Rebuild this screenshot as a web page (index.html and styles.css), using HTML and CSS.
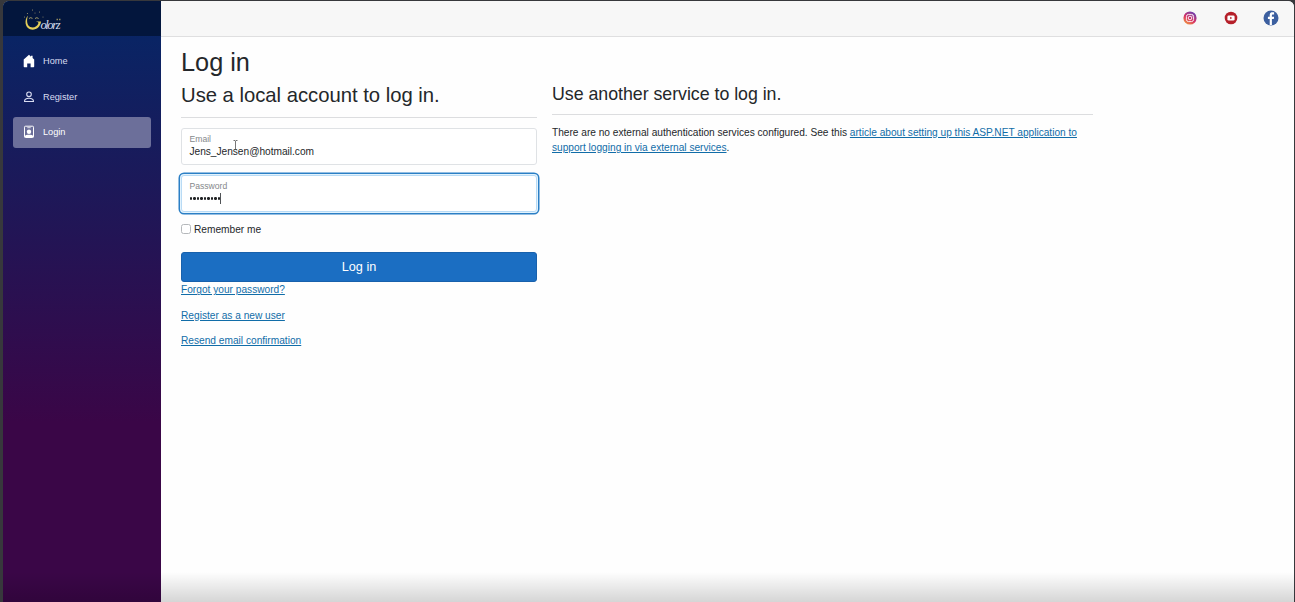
FILE: index.html
```html
<!DOCTYPE html>
<html lang="en">
<head>
<meta charset="utf-8">
<title>Log in</title>
<link rel="stylesheet" href="styles.css">
</head>
<body>
<div class="window">
  <aside class="sidebar">
    <div class="brand">
      <svg class="logo" width="44" height="26" viewBox="0 0 44 26">
        <path d="M5 6.500C1 11 2 18.500 7 20.300c5.200 1.700 10.500-2 11-7.800h-5.500c1.900.3 2.900.8 3 1.600-1.200 3.800-5 5.300-8.200 4C4 16.500 3.300 11.500 5 6.500z" fill="#e5cf58"/>
        <path d="M6 9.500q1.600-1.600 3.500-.1M12 9.500q1.900-1.600 3.600 0" fill="none" stroke="#c9bd75" stroke-width=".8"/>
        <g fill="#9d9470"><circle cx="4.500" cy="4.500" r=".6"/><circle cx="9.500" cy="1" r=".6"/><circle cx="12" cy="4" r=".5"/><circle cx="16.500" cy="3" r=".6"/><circle cx="1.500" cy="8" r=".5"/><circle cx="20" cy="8" r=".5"/></g>
        <text class="logo-text" x="17.500" y="19.500" textLength="20">olorz</text>
        <path d="M33.500 10.500h4" stroke="#938b60" stroke-width="1.500" stroke-dasharray="1.500 1"/>
      </svg>
    </div>
    <nav class="nav">
      <a class="nav-item"><svg width="14" height="14" viewBox="0 0 14 14"><path d="M7 .8 1.700 5.500v7c0 .4.300.7.700.7h2.800V9.500h3.400v3.700h2.900c.4 0 .7-.3.700-.7v-7l-1.600-1.400V1.800H9v1z" fill="#fff"/></svg>Home</a>
      <a class="nav-item"><svg width="14" height="14" viewBox="0 0 14 14" fill="none" stroke="#d9dcf0" stroke-width="1.100"><circle cx="7" cy="4.300" r="2.300"/><path d="M2.500 11.500c0-2 2-3.200 4.500-3.200s4.500 1.200 4.500 3.200z" stroke-linejoin="round"/></svg>Register</a>
      <a class="nav-item active"><svg width="14" height="14" viewBox="0 0 14 14"><rect x="2.500" y="1.200" width="9" height="11.300" rx="1" fill="none" stroke="#fff"/><path d="M5.300 2.700h3.400" stroke="#fff" stroke-width=".8"/><circle cx="7" cy="6.700" r="2.200" fill="#fff"/><path d="M2.500 12.300V11c1-1 2.500-1.300 4.500-1.300s3.500.3 4.500 1.300v1.300z" fill="#fff"/></svg>Login</a>
    </nav>
  </aside>
  <div class="page">
    <header class="topbar">
      <svg width="14" height="14" viewBox="0 0 14 14">
        <defs><linearGradient id="insta" x1=".15" y1="1" x2=".75" y2="0"><stop offset="0" stop-color="#f3a43d"/><stop offset=".45" stop-color="#d93263"/><stop offset="1" stop-color="#6440b5"/></linearGradient></defs>
        <circle cx="7" cy="7" r="6.600" fill="url(#insta)"/><rect x="3.400" y="3.400" width="7.200" height="7.200" rx="2.200" fill="none" stroke="#fff" stroke-width=".9"/><circle cx="7" cy="7" r="1.800" fill="none" stroke="#fff" stroke-width=".9"/><circle cx="9.100" cy="4.900" r=".5" fill="#fff"/>
      </svg>
      <svg width="14" height="14" viewBox="0 0 14 14"><circle cx="7" cy="7" r="6.300" fill="#b5202a"/><rect x="3.400" y="4.400" width="7.200" height="5.200" rx="1.400" fill="#fff"/><path d="M6.200 5.800v2.400L8.200 7z" fill="#b5202a"/></svg>
      <svg class="facebook" width="16" height="16" viewBox="0 0 16 16"><circle cx="8" cy="8" r="7.500" fill="#3c5f9f"/><path d="M6.700 15V8.900H4.900V6.700h1.800V5.200c0-2 1-3 2.700-3h1.700v2.200h-1.200c-.8 0-1 .4-1 1.100v1.200h2.200l-.3 2.200H8.900V15z" fill="#fff"/></svg>
    </header>
    <main class="content">
      <h1>Log in</h1>
      <div class="columns">
        <section class="local">
          <h2>Use a local account to log in.</h2>
          <hr>
          <div class="field"><label>Email</label><span class="value">Jens_Jensen@hotmail.com</span>
            <svg class="pointer" width="5" height="10" viewBox="0 0 5 10"><path d="M.5.5h1.500l.5.500.500-.500h1.500M2.500 1v8M1 9.500h3" fill="none" stroke="#555" stroke-width=".8"/></svg>
          </div>
          <div class="field focused"><label>Password</label><span class="value password"><i></i><i></i><i></i><i></i><i></i><i></i><i></i><i></i><i></i><b class="caret"></b></span></div>
          <div class="remember"><span class="check"></span>Remember me</div>
          <button class="submit">Log in</button>
          <div class="links"><a>Forgot your password?</a><a>Register as a new user</a><a>Resend email confirmation</a></div>
        </section>
        <section class="external">
          <h3>Use another service to log in.</h3>
          <hr>
          <p>There are no external authentication services configured. See this <a>article about setting up this ASP.NET application to<br>support logging in via external services</a>.</p>
        </section>
      </div>
    </main>
  </div>
  <div class="shade"></div>
</div>
</body>
</html>
```
FILE: styles.css
```css
* { box-sizing: border-box; }
body {
  margin: 0;
  height: 602px;
  overflow: hidden;
  padding: 1px 1px 0 3px;
  background: #37383c;
  font: 10.16px/15.2px "Liberation Sans", Arial, sans-serif;
  color: #24272a;
}
.window {
  position: relative;
  display: flex;
  height: 601px;
  overflow: hidden;
  border-radius: 6px 6px 0 0;
  background: #fefefe;
}
.sidebar {
  width: 158px;
  background: linear-gradient(180deg, #052767 0%, #3a0647 70%);
}
.brand {
  height: 35px;
  padding: 8px 0 0 20px;
  background: #03163d;
}
.logo { display: block; }
.logo-text {
  fill: #d4dcec;
  font: italic 12.5px "Liberation Serif", serif;
}
.nav {
  display: flex;
  flex-direction: column;
  gap: 5px;
  padding: 10px 10px 0;
}
.nav-item {
  display: flex;
  align-items: center;
  gap: 7px;
  height: 30.5px;
  padding: 1px 0 0 9px;
  border-radius: 3px;
  color: #d9dcf0;
  font-size: 9.2px;
}
.nav-item svg { margin-top: -1px; }
.active { background: #6c6f9a; color: #fff; }
.page { flex: 1; }
.topbar {
  display: flex;
  justify-content: flex-end;
  align-items: center;
  gap: 26.5px;
  height: 36px;
  padding: 0 15px 0 0;
  border-bottom: 1px solid #dfdfe0;
  background: #f7f7f7;
}
.topbar svg { position: relative; top: -.5px; }
.facebook { margin-left: -1px; }
.content { padding: 10px 20px 0; }
h1, h2, h3 { margin: 0; font-weight: 400; white-space: nowrap; }
h1 { font-size: 25.3px; line-height: 31.5px; height: 35.5px; }
h2 { font-size: 20.3px; line-height: 24.4px; letter-spacing: -.02px; }
h3 { font-size: 17.8px; height: 21.3px; line-height: 22.5px; letter-spacing: -.03px; }
hr { height: 1px; margin: 10px 0; border: 0; background: #dcdddf; }
.columns { display: flex; gap: 15px; }
.local { width: 356px; }
.external { width: 541px; }
.external p { margin: 0; white-space: nowrap; letter-spacing: -.012px; }
.field {
  position: relative;
  display: flex;
  flex-direction: column;
  height: 37px;
  margin-bottom: 10px;
  padding: 5px 7.5px 0;
  border: 1px solid #dfe2e5;
  border-radius: 3px;
  background: #fff;
}
label { height: 11px; font-size: 8.6px; line-height: 11px; color: #85888b; }
.value { height: 13px; line-height: 13px; letter-spacing: -.02px; }
.pointer { position: absolute; left: 51px; top: 11px; }
.focused {
  border-color: #b9dbf5;
  box-shadow: 0 0 0 1px #e3f3fd, 0 0 0 2.5px #2b7fc5;
}
.password { display: flex; align-items: center; gap: 1px; }
.password i { width: 2.55px; height: 2.6px; border-radius: 50%; background: #202224; }
.caret { width: 1px; height: 11px; margin-left: -1px; background: #505356; }
.remember { display: flex; align-items: center; gap: 3px; height: 15px; margin-bottom: 15px; font-size: 10.16px; }
.check { width: 10px; height: 10px; border: 1px solid #b5b8bb; border-radius: 2.5px; background: #fff; }
.submit {
  display: block;
  width: 100%;
  height: 30.4px;
  padding: 0;
  border: 1px solid #1861ac;
  border-radius: 3px;
  background: #1b6ec2;
  color: #fff;
  font: 12.7px/28px "Liberation Sans", Arial, sans-serif;
}
.links { display: flex; flex-direction: column; align-items: flex-start; gap: 10.1px; }
a { color: #116da8; }
.links a, p a { text-decoration: underline; }
.links a { white-space: nowrap; }
.nav .nav-item { color: #d9dcf0; }
.nav .active { color: #fff; }
.shade {
  position: absolute;
  inset: auto 0 0;
  height: 30px;
  background: linear-gradient(rgba(0, 0, 0, 0), rgba(0, 0, 0, .16));
}
```
